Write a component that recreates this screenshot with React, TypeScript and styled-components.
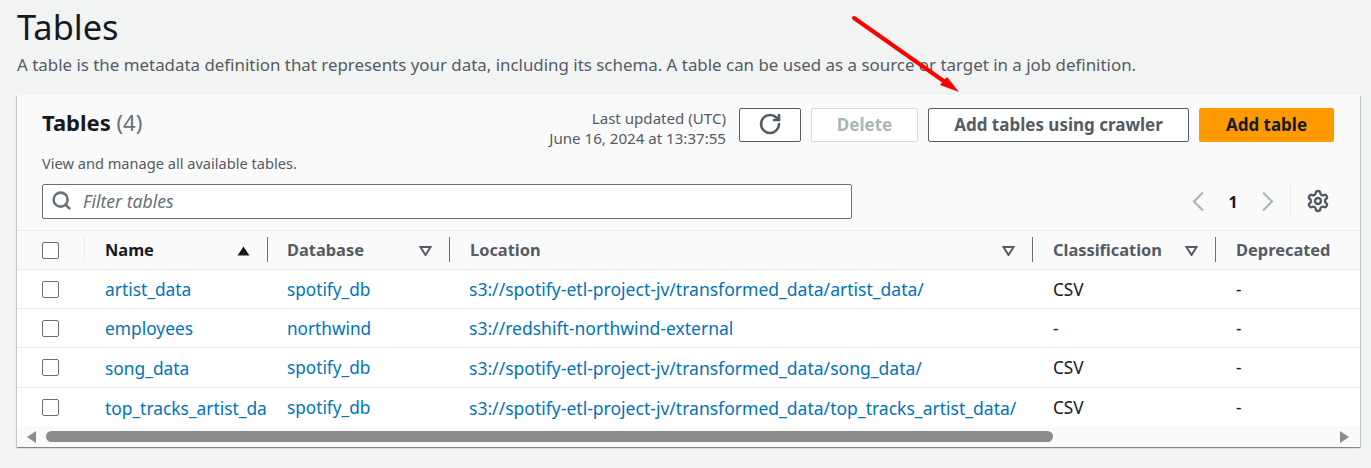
import React from "react";
import styled, { createGlobalStyle } from "styled-components";
import { RotateCw, Search, Settings } from "lucide-react";

const Global = createGlobalStyle`
  html, body { margin: 0; padding: 0; background: #f2f3f3; }
  body { width: 1371px; height: 468px; overflow: hidden; font-family: "Noto Sans", sans-serif; color: #16191f; }
`;

const GRID = "68px 182px 182px 583px 183px 145px";

const Page = styled.div`
  position: relative;
  height: 468px;
  padding: 0 11px 0 17px;
  box-sizing: border-box;
`;

const Title = styled.h1`
  margin: 0;
  font-size: 34.4px;
  line-height: 54px;
  font-weight: 400;
  color: #16191f;
`;

const Description = styled.p`
  margin: 0 0 19px;
  font-size: 16.9px;
  line-height: 22px;
  color: #545b64;
  white-space: nowrap;
`;

const Card = styled.section`
  width: 1343px;
  height: 352px;
  background: #fafafa;
  box-shadow: 0 1px 1px 0 rgba(0, 28, 36, 0.3), 1px 1px 1px 0 rgba(0, 28, 36, 0.15), -1px 1px 1px 0 rgba(0, 28, 36, 0.15);
  display: flex;
  flex-direction: column;
`;

const Head = styled.div`
  height: 136px;
  padding: 13px 26px 0 25px;
  box-sizing: border-box;
`;

const TopRow = styled.div`
  display: flex;
  align-items: flex-start;
`;

const CardTitle = styled.h2`
  margin: 0;
  flex: 1;
  font-size: 22px;
  line-height: 28px;
  font-weight: 700;
  color: #16191f;
`;

const Count = styled.span`
  font-weight: 400;
  color: #687078;
`;

const Updated = styled.div`
  margin-right: 13px;
  font-size: 15.1px;
  line-height: 20px;
  text-align: right;
  color: #545b64;
`;

const Actions = styled.div`
  display: flex;
  gap: 10px;
`;

const Button = styled.button<{ $w: number; $kind?: "primary" | "disabled" }>`
  width: ${(p) => p.$w}px;
  height: 34px;
  padding: 0 0 2px;
  box-sizing: border-box;
  display: flex;
  align-items: center;
  justify-content: center;
  border-radius: 2px;
  font-family: inherit;
  font-size: 17px;
  font-weight: 700;
  border: 1px solid ${(p) => (p.$kind === "primary" ? "#ff9900" : p.$kind === "disabled" ? "#d5dbdb" : "#545b64")};
  background: ${(p) => (p.$kind === "primary" ? "#ff9900" : "#fff")};
  color: ${(p) => (p.$kind === "primary" ? "#16191f" : p.$kind === "disabled" ? "#aab7b8" : "#545b64")};
`;

const Subtitle = styled.div`
  margin-top: 5px;
  font-size: 14.6px;
  line-height: 20px;
  color: #545b64;
`;

const ToolRow = styled.div`
  margin-top: 11px;
  display: flex;
  align-items: center;
  justify-content: space-between;
`;

const Filter = styled.div`
  width: 810px;
  height: 35px;
  box-sizing: border-box;
  padding: 0 0 2px 8px;
  display: flex;
  align-items: center;
  gap: 11px;
  background: #fff;
  border: 1px solid #687078;
  border-radius: 2px;
  color: #687078;
  font-size: 17.6px;
  font-style: italic;
`;

const Pager = styled.div`
  display: flex;
  align-items: center;
  height: 35px;
`;

const PageNumber = styled.span`
  width: 56px;
  text-align: center;
  font-size: 16px;
  font-weight: 700;
  color: #16191f;
`;

const PagerSettings = styled.div`
  margin-left: 16px;
  padding: 0 4px 2px 15px;
  height: 35px;
  box-sizing: border-box;
  display: flex;
  align-items: center;
  border-left: 1px solid #eaeded;
  color: #545b64;
`;

const HeaderRow = styled.div`
  display: grid;
  grid-template-columns: ${GRID};
  height: 40px;
  box-sizing: border-box;
  border-top: 1px solid #eaeded;
  border-bottom: 1px solid #eaeded;
`;

const HeaderCell = styled.div<{ $active?: boolean; $last?: boolean; $check?: boolean }>`
  position: relative;
  display: flex;
  align-items: center;
  justify-content: space-between;
  padding: 0 17px ${(p) => (p.$check ? 0 : 2)}px ${(p) => (p.$check ? 25 : 20)}px;
  font-size: 16.4px;
  font-weight: 700;
  color: ${(p) => (p.$active ? "#16191f" : "#545b64")};
  &:nth-child(n + 4) { padding-left: 21px; }
  svg { margin-top: 4px; }
  &::after {
    content: ${(p) => (p.$last ? "none" : '""')};
    position: absolute;
    right: ${(p) => (p.$check ? 0 : -1)}px;
    top: 6px;
    height: 25px;
    width: 1px;
    background: ${(p) => (p.$check ? "#eaeded" : "#687078")};
  }
`;

const CheckCell = styled.div`
  display: flex;
  align-items: center;
  padding-left: 25px;
`;

const Box = styled.span`
  width: 17px;
  height: 17px;
  box-sizing: border-box;
  background: #fff;
  border: 1px solid #687078;
  border-radius: 2px;
`;

const Body = styled.div`
  background: #fff;
  flex: 1;
`;

const Row = styled.div<{ $h: number }>`
  display: grid;
  grid-template-columns: ${GRID};
  height: ${(p) => p.$h}px;
  box-sizing: border-box;
  border-bottom: 1px solid #eaeded;
  &:last-child { border-bottom: 0; }
`;

const Cell = styled.div<{ $size?: number; $pad?: number }>`
  display: flex;
  align-items: center;
  padding-left: ${(p) => p.$pad ?? 20}px;
  font-size: ${(p) => p.$size ?? 17.2}px;
  color: #16191f;
  white-space: nowrap;
`;

const LinkText = styled.a`
  color: #0073bb;
  text-decoration: none;
`;

const Scrollbar = styled.div`
  height: 19px;
  display: flex;
  align-items: center;
  padding: 0 11px 1px 10px;
  background: #fafafa;
`;

const ScrollThumb = styled.div`
  margin-left: 10px;
  width: 1007px;
  height: 11px;
  border-radius: 6px;
  background: #8c8c8c;
`;

const ScrollSpace = styled.div`
  flex: 1;
`;

const ArrowOverlay = styled.svg`
  position: absolute;
  left: 845px;
  top: 10px;
`;

const SortUp = () => (
  <svg width="13" height="10" viewBox="0 0 13 10">
    <path d="M6.5 0.5 L12.5 9.5 H0.5 Z" fill="#16191f" />
  </svg>
);

const SortDown = () => (
  <svg width="13" height="10" viewBox="0 0 13 10">
    <path d="M1.5 1 H11.5 L6.5 9 Z" fill="#fff" stroke="#545b64" strokeWidth="2" />
  </svg>
);

const Chevron = ({ right }: { right?: boolean }) => (
  <svg width="13" height="21" viewBox="0 0 13 21" fill="none">
    <path d={right ? "M2 1.5 L11 10.5 L2 19.5" : "M11 1.5 L2 10.5 L11 19.5"} stroke="#aab7b8" strokeWidth="2.2" />
  </svg>
);

const ScrollArrow = ({ right }: { right?: boolean }) => (
  <svg width="9" height="12" viewBox="0 0 9 12">
    <path d={right ? "M0 0 L9 6 L0 12 Z" : "M9 0 L0 6 L9 12 Z"} fill="#8c8c8c" />
  </svg>
);

const rows = [
  { name: "artist_data", db: "spotify_db", loc: "s3://spotify-etl-project-jv/transformed_data/artist_data/", cls: "CSV", h: 39 },
  { name: "employees", db: "northwind", loc: "s3://redshift-northwind-external", cls: "-", h: 39 },
  { name: "song_data", db: "spotify_db", loc: "s3://spotify-etl-project-jv/transformed_data/song_data/", cls: "CSV", h: 40 },
  { name: "top_tracks_artist_da", db: "spotify_db", loc: "s3://spotify-etl-project-jv/transformed_data/top_tracks_artist_data/", cls: "CSV", h: 39 },
];

export default function App() {
  return (
    <Page>
      <Global />
      <Title>Tables</Title>
      <Description>
        A table is the metadata definition that represents your data, including its schema. A table can be used as a
        source or target in a job definition.
      </Description>
      <Card>
        <Head>
          <TopRow>
            <CardTitle>
              Tables <Count>(4)</Count>
            </CardTitle>
            <Updated>
              Last updated (UTC)
              <br />
              June 16, 2024 at 13:37:55
            </Updated>
            <Actions>
              <Button $w={62}>
                <RotateCw size={24} strokeWidth={2.6} />
              </Button>
              <Button $w={107} $kind="disabled">
                Delete
              </Button>
              <Button $w={261}>Add tables using crawler</Button>
              <Button $w={135} $kind="primary">
                Add table
              </Button>
            </Actions>
          </TopRow>
          <Subtitle>View and manage all available tables.</Subtitle>
          <ToolRow>
            <Filter>
              <Search size={21} strokeWidth={2.9} />
              Filter tables
            </Filter>
            <Pager>
              <Chevron />
              <PageNumber>1</PageNumber>
              <Chevron right />
              <PagerSettings>
                <Settings size={24} strokeWidth={2.4} />
              </PagerSettings>
            </Pager>
          </ToolRow>
        </Head>
        <HeaderRow>
          <HeaderCell $check>
            <Box />
          </HeaderCell>
          <HeaderCell $active>
            Name <SortUp />
          </HeaderCell>
          <HeaderCell>
            Database <SortDown />
          </HeaderCell>
          <HeaderCell>
            Location <SortDown />
          </HeaderCell>
          <HeaderCell>
            Classification <SortDown />
          </HeaderCell>
          <HeaderCell $last>Deprecated</HeaderCell>
        </HeaderRow>
        <Body>
          {rows.map((r) => (
            <Row key={r.name} $h={r.h}>
              <CheckCell>
                <Box />
              </CheckCell>
              <Cell $size={17.35}>
                <LinkText>{r.name}</LinkText>
              </Cell>
              <Cell>
                <LinkText>{r.db}</LinkText>
              </Cell>
              <Cell $size={17.55}>
                <LinkText>{r.loc}</LinkText>
              </Cell>
              <Cell $pad={21}>{r.cls}</Cell>
              <Cell $pad={21}>-</Cell>
            </Row>
          ))}
        </Body>
        <Scrollbar>
          <ScrollArrow />
          <ScrollThumb />
          <ScrollSpace />
          <ScrollArrow right />
        </Scrollbar>
      </Card>
      <ArrowOverlay width="125" height="90" viewBox="0 0 125 90">
        <line x1="9" y1="8" x2="100" y2="72" stroke="#f00" strokeWidth="4" strokeLinecap="round" />
        <path d="M114 82 L95 75 L102 67 Z" fill="#f00" />
      </ArrowOverlay>
    </Page>
  );
}
